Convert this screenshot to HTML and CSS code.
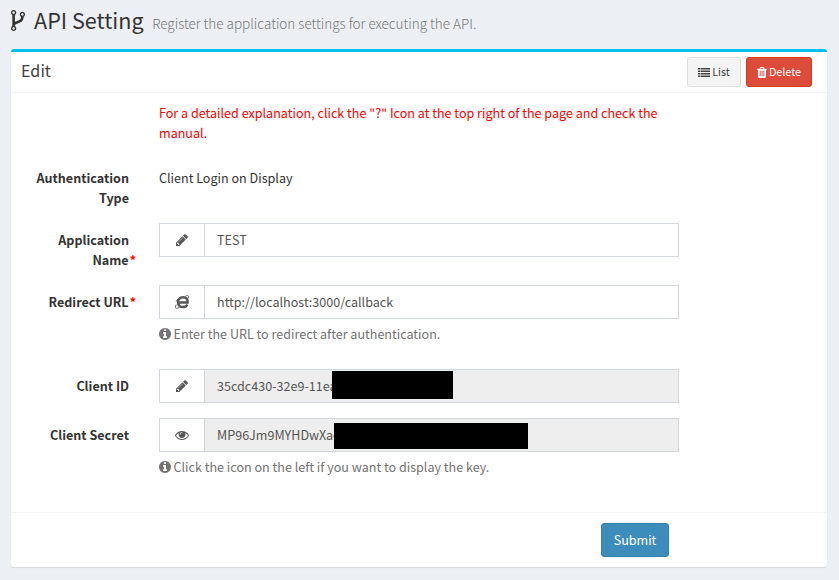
FILE: index.html
```html
<!DOCTYPE html>
<html lang="en">
<head>
<meta charset="utf-8">
<title>API Setting</title>
<link rel="stylesheet" href="styles.css">
</head>
<body>
<svg class="sprite" aria-hidden="true">
  <symbol id="pencil" viewBox="0 0 1792 1792"><path d="M491 1536l91-91-235-235-91 91v107h128v128h107zm523-928q0-22-22-22-10 0-17 7l-542 542q-7 7-7 17 0 22 22 22 10 0 17-7l542-542q7-7 7-17zm-54-192l416 416-832 832h-416v-416zm683 96q0 53-37 90l-166 166-416-416 166-165q36-38 90-38 53 0 91 38l235 234q37 39 37 91z"/></symbol>
  <symbol id="info" viewBox="128 0 1536 1792"><path d="M1152 1376v-160q0-14-9-23t-23-9h-96v-512q0-14-9-23t-23-9h-320q-14 0-23 9t-9 23v160q0 14 9 23t23 9h96v320h-96q-14 0-23 9t-9 23v160q0 14 9 23t23 9h448q14 0 23-9t9-23zm-128-896v-160q0-14-9-23t-23-9h-192q-14 0-23 9t-9 23v160q0 14 9 23t23 9h192q14 0 23-9t9-23zm640 416q0 209-103 385.5t-279.5 279.5-385.5 103-385.5-103-279.5-279.5-103-385.5 103-385.5 279.5-279.5 385.5-103 385.5 103 279.5 279.5 103 385.5z"/></symbol>
</svg>
<header class="page-header">
  <svg class="icon-fork" viewBox="384 128 1024 1536"><path d="M672 1472q0-40-28-68t-68-28-68 28-28 68 28 68 68 28 68-28 28-68zm0-1152q0-40-28-68t-68-28-68 28-28 68 28 68 68 28 68-28 28-68zm640 128q0-40-28-68t-68-28-68 28-28 68 28 68 68 28 68-28 28-68zm96 0q0 52-26 96.5t-70 69.5q-2 287-226 414-67 38-203 81-128 40-169.5 71t-41.5 100v26q44 25 70 69.5t26 96.5q0 80-56 136t-136 56-136-56-56-136q0-52 26-96.5t70-69.5v-820q-44-25-70-69.5t-26-96.5q0-80 56-136t136-56 136 56 56 136q0 52-26 96.5t-70 69.5v497q54-26 154-57 55-17 87.5-29.5t70.5-31 59-39.5 40.5-51 28-69.5 8.5-91.5q-44-25-70-69.5t-26-96.5q0-80 56-136t136-56 136 56 56 136z"/></svg>
  <h1>API Setting</h1>
  <small>Register the application settings for executing the API.</small>
</header>
<main class="box">
  <div class="box-header">
    <h2>Edit</h2>
    <div class="tools">
      <button class="btn btn-default"><svg class="icon-list" viewBox="0 0 12 9"><path d="M0 0h2v1.500H0zM2.500 0H12v1.500H2.500zM0 2.500h2V4H0zM2.500 2.500H12V4H2.500zM0 5h2v1.500H0zM2.500 5H12v1.500H2.500zM0 7.500h2V9H0zM2.500 7.500H12V9H2.500z"/></svg><span>List</span></button>
      <button class="btn btn-danger"><svg class="icon-trash" viewBox="192 128 1408 1536"><path d="M704 1376v-704q0-14-9-23t-23-9h-64q-14 0-23 9t-9 23v704q0 14 9 23t23 9h64q14 0 23-9t9-23zm256 0v-704q0-14-9-23t-23-9h-64q-14 0-23 9t-9 23v704q0 14 9 23t23 9h64q14 0 23-9t9-23zm256 0v-704q0-14-9-23t-23-9h-64q-14 0-23 9t-9 23v704q0 14 9 23t23 9h64q14 0 23-9t9-23zm-544-992h448l-48-117q-7-9-17-11h-317q-10 2-17 11zm928 32v64q0 14-9 23t-23 9h-96v948q0 83-47 143.5t-113 60.5h-832q-66 0-113-58.5t-47-141.5v-952h-96q-14 0-23-9t-9-23v-64q0-14 9-23t23-9h309l70-167q15-37 54-63t79-26h320q40 0 79 26t54 63l70 167h309q14 0 23 9t9 23z"/></svg><span>Delete</span></button>
    </div>
  </div>
  <form class="box-body">
    <p class="notice">For a detailed explanation, click the "?" Icon at the top right of the page and check the<br>manual.</p>
    <div class="row row-type">
      <label>Authentication<br>Type</label>
      <div class="static">Client Login on Display</div>
    </div>
    <div class="row row-name">
      <label class="required">Application<br>Name</label>
      <div class="group"><span class="addon"><svg class="icon"><use href="#pencil"/></svg></span><div class="input">TEST</div></div>
    </div>
    <div class="row row-url">
      <label class="required">Redirect URL</label>
      <div>
        <div class="group"><span class="addon"><svg class="icon" viewBox="0 0 14 14"><path class="ie-e" d="M4 7.500H12.600C12.800 4 11 2.200 8.200 2.200 5.200 2.200 3 4.400 3 7.200 3 10.200 5.200 12.100 8 12.100 10.200 12.100 11.600 11.100 12.300 9.500"/><path class="ie-ring" d="M1.200 9.500C.2 11.800.3 13.400 1.600 13.400 2.500 13.400 3.600 12.900 4.600 12.200M10.300 1.200C12.300.2 13.500.4 13.500 1.700 13.500 2.400 13.300 3 12.900 3.800M1 6.600C2 4.600 3.600 3 5.500 2"/></svg></span><div class="input">http://localhost:3000/callback</div></div>
        <p class="help"><svg class="icon-info"><use href="#info"/></svg><span>Enter the URL to redirect after authentication.</span></p>
      </div>
    </div>
    <div class="row row-id">
      <label>Client ID</label>
      <div class="group"><span class="addon"><svg class="icon"><use href="#pencil"/></svg></span><div class="input readonly">35cdc430-32e9-11ea<i class="mask mask-id"></i></div></div>
    </div>
    <div class="row row-secret">
      <label>Client Secret</label>
      <div>
        <div class="group"><span class="addon"><svg class="icon" viewBox="0 0 1792 1792"><path d="M1664 960q-152-236-381-353 61 104 61 225 0 185-131.5 316.5t-316.5 131.5-316.5-131.5-131.5-316.5q0-121 61-225-229 117-381 353 133 205 333.5 326.5t434.5 121.5 434.5-121.5 333.5-326.5zm-720-384q0-20-14-34t-34-14q-125 0-214.5 89.500t-89.500 214.500q0 20 14 34t34 14 34-14 14-34q0-86 61-147t147-61q20 0 34-14t14-34zm848 384q0 34-20 69-140 230-376.500 368.500t-499.500 138.500-499.500-139-376.500-368q-20-35-20-69t20-69q140-229 376.500-368t499.500-139 499.500 139 376.500 368q20 35 20 69z"/></svg></span><div class="input readonly">MP96Jm9MYHDwXac<i class="mask mask-secret"></i></div></div>
        <p class="help"><svg class="icon-info"><use href="#info"/></svg><span>Click the icon on the left if you want to display the key.</span></p>
      </div>
    </div>
  </form>
  <footer class="box-footer"><button class="submit">Submit</button></footer>
</main>
</body>
</html>
```
FILE: styles.css
```css
* { box-sizing: border-box; }
body {
  margin: 0;
  height: 580px;
  overflow: hidden;
  background: #ecf0f5;
  color: #333;
  font: 12.57px/20px "Noto Sans CJK JP", "Open Sans", sans-serif;
}
svg { fill: currentColor; flex: none; }
.sprite { display: none; }
h1, h2, p { margin: 0; font-weight: 400; }
button { font-family: inherit; margin: 0; }
.page-header { display: flex; height: 49px; padding-left: 11px; align-items: flex-start; }
.icon-fork { width: 14px; height: 21px; margin-top: 10px; }
h1 { font-size: 21.6px; line-height: 26px; margin: 7px 0 0 9px; white-space: nowrap; }
.page-header small { font-size: 13.5px; font-weight: 300; line-height: 20px; color: #777; margin: 13px 0 0 8.5px; white-space: nowrap; }
.box {
  width: 816px;
  height: 518px;
  margin-left: 11px;
  background: #fff;
  border-top: 3px solid #00c0ef;
  border-radius: 3px;
  box-shadow: 0 1px 1px rgba(0, 0, 0, .1);
}
.box-header { display: flex; justify-content: space-between; height: 41px; padding: 5px 15px 0 10px; border-bottom: 1px solid #f4f4f4; }
h2 { font-size: 16.2px; line-height: 20px; margin-top: 3px; color: #444; }
.tools { display: flex; gap: 5px; }
.btn { display: flex; align-items: center; justify-content: center; height: 30px; padding: 0; border: 1px solid #ddd; border-radius: 3px; font-size: 10.8px; line-height: 18px; }
.btn span { margin-top: -2px; }
.btn-default { width: 54px; gap: 2px; background: #f4f4f4; color: #444; }
.btn-danger { width: 66px; gap: 2px; background: #dd4b39; border-color: #d73925; color: #fff; }
.icon-list { width: 12px; height: 9px; }
.icon-trash { width: 10px; height: 11px; }
.box-body { height: 419px; padding: 10px 0 0 10px; }
.notice { color: #f00; margin-left: 138px; height: 65px; white-space: nowrap; }
.row { display: grid; grid-template-columns: 108px 520px; column-gap: 30px; }
.row label { text-align: right; font-weight: 700; }
.row-type { height: 55px; }
.row-name { height: 62px; }
.row-url { height: 84px; }
.row-id { height: 49px; }
.row-name label, .row-url label, .row-id label, .row-secret label { padding-top: 7px; }
.required::after { content: "*"; color: #f00; margin-right: -7px; padding-left: 1px; }
.group { display: flex; height: 34px; border: 1px solid #d2d6de; }
.addon { display: flex; align-items: center; justify-content: center; width: 45px; border-right: 1px solid #d2d6de; color: #555; }
.icon { width: 14px; height: 14px; }
.ie-e, .ie-ring { fill: none; stroke: currentColor; }
.ie-e { stroke-width: 2.5; }
.ie-ring { stroke-width: .9; }
.input { position: relative; flex: 1; padding: 6px 12px; color: #555; white-space: nowrap; }
.readonly { background: #eee; }
.mask { position: absolute; background: #000; }
.mask-id { left: 127px; top: 1px; width: 121px; height: 28px; }
.mask-secret { left: 129px; top: 4px; width: 194px; height: 26px; }
.help { display: flex; align-items: center; gap: 2.5px; margin-top: 5px; color: #737373; white-space: nowrap; }
.icon-info { width: 12px; height: 14px; }
.box-footer { display: flex; justify-content: flex-end; height: 55px; padding: 10px 158px 0 0; border-top: 1px solid #f4f4f4; }
.submit { width: 68px; height: 34px; padding: 0 0 2px; border: 1px solid #367fa9; border-radius: 3px; background: #3c8dbc; color: #fff; font-size: 12.57px; }
```
